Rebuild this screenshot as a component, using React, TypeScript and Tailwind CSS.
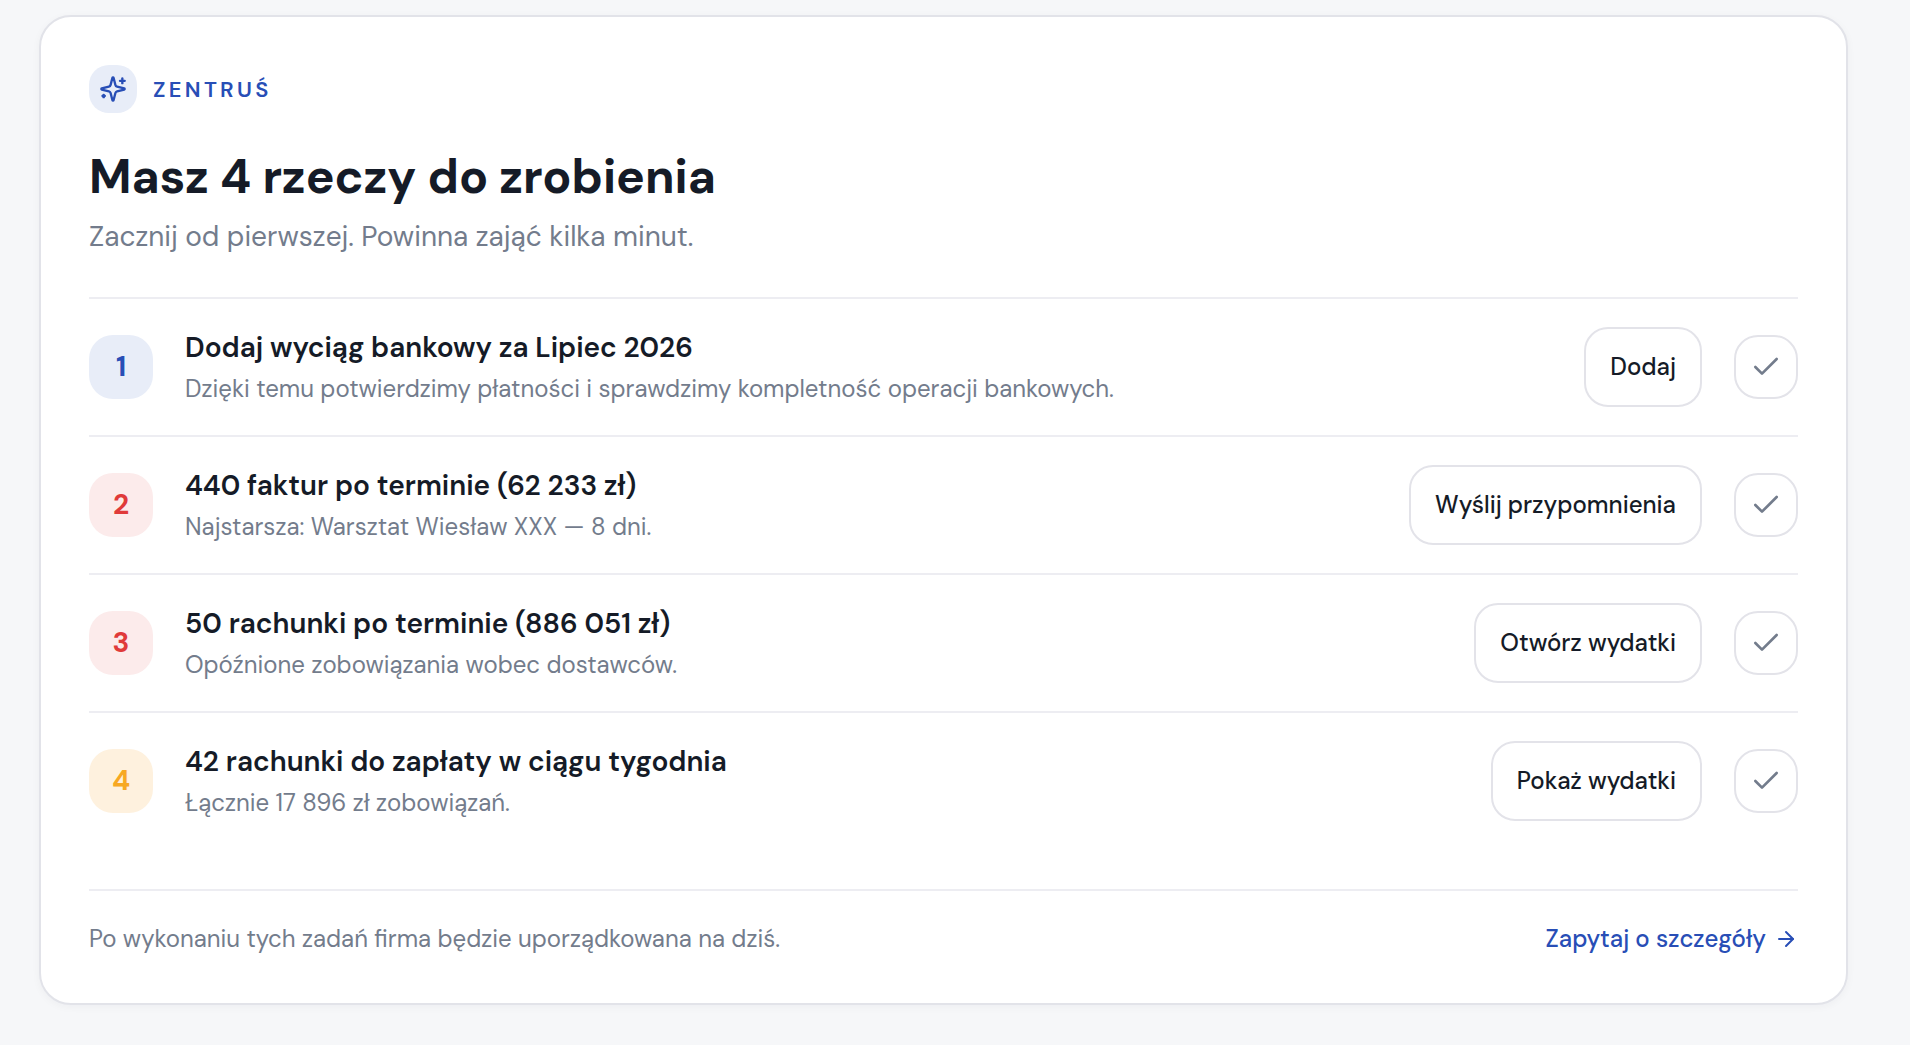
import React, { useState } from "react";
import { ArrowRight, Check } from "lucide-react";

interface Task {
  id: number;
  title: string;
  description: string;
  action: string;
  badge: string;
}

const initialTasks: Task[] = [
  {
    id: 1,
    title: "Dodaj wyciąg bankowy za Lipiec 2026",
    description: "Dzięki temu potwierdzimy płatności i sprawdzimy kompletność operacji bankowych.",
    action: "Dodaj",
    badge: "bg-[#e8edf8] text-[#284eb6]",
  },
  {
    id: 2,
    title: "440 faktur po terminie (62 233 zł)",
    description: "Najstarsza: Warsztat Wiesław XXX — 8 dni.",
    action: "Wyślij przypomnienia",
    badge: "bg-[#fcebeb] text-[#e03a3a]",
  },
  {
    id: 3,
    title: "50 rachunki po terminie (886 051 zł)",
    description: "Opóźnione zobowiązania wobec dostawców.",
    action: "Otwórz wydatki",
    badge: "bg-[#fcebeb] text-[#e03a3a]",
  },
  {
    id: 4,
    title: "42 rachunki do zapłaty w ciągu tygodnia",
    description: "Łącznie 17 896 zł zobowiązań.",
    action: "Pokaż wydatki",
    badge: "bg-[#fef1de] text-[#f7a823]",
  },
];

const SparklesIcon: React.FC = () => (
  <svg
    className="w-7 h-7"
    fill="none"
    stroke="currentColor"
    strokeWidth={2}
    strokeLinecap="round"
    strokeLinejoin="round"
    viewBox="0 0 24 24"
    aria-hidden="true"
  >
    <path d="M9.937 15.5A2 2 0 0 0 8.5 14.063l-6.135-1.582a.5.5 0 0 1 0-.962L8.5 9.936A2 2 0 0 0 9.937 8.5l1.582-6.135a.5.5 0 0 1 .963 0L14.063 8.5A2 2 0 0 0 15.5 9.937l6.135 1.581a.5.5 0 0 1 0 .964L15.5 14.063a2 2 0 0 0-1.437 1.437l-1.582 6.135a.5.5 0 0 1-.963 0z" />
    <path d="M20 3v4" />
    <path d="M22 5h-4" />
    <path d="M4 17v2" />
    <path d="M5 18H3" />
  </svg>
);

const TaskRow: React.FC<{ task: Task; onDone: (id: number) => void }> = ({ task, onDone }) => (
  <li className="flex items-center gap-8 py-7 border-b-2 border-[#ededf2] last:border-b-0">
    <span
      className={`flex items-center justify-center shrink-0 w-16 h-16 rounded-3xl text-[28px] font-bold ${task.badge}`}
    >
      {task.id}
    </span>
    <div className="flex-1 min-w-0">
      <h3 className="text-[28px] leading-[42px] font-semibold">{task.title}</h3>
      <p className="mt-0.5 text-[24px] leading-9 text-[#737c8c]">{task.description}</p>
    </div>
    <button
      type="button"
      className="shrink-0 h-20 px-6 rounded-3xl border-2 border-[#e3e3e9] text-[24px] font-medium hover:bg-gray-50 transition-colors"
    >
      {task.action}
    </button>
    <button
      type="button"
      aria-label="Oznacz jako zrobione"
      onClick={() => onDone(task.id)}
      className="flex items-center justify-center shrink-0 w-16 h-16 rounded-3xl border-2 border-[#e3e3e9] text-[#737c8c] hover:bg-gray-50 transition-colors"
    >
      <Check className="w-8 h-8" />
    </button>
  </li>
);

const App: React.FC = () => {
  const [tasks, setTasks] = useState(initialTasks);

  const handleDone = (id: number) => {
    setTasks(tasks.filter((task) => task.id !== id));
  };

  return (
    <main className="min-h-screen bg-[#f6f7f9] pt-[15px] pb-10 pl-[39px] pr-[62px] font-['DM_Sans','Inter',sans-serif] text-[#151b27]">
      <section className="p-12 bg-white border-2 border-[#e2e3e9] rounded-[32px] shadow-[0_2px_8px_rgba(16,24,40,0.04)]">
        {/* Brand */}
        <div className="flex items-center gap-4 text-[#284eb6]">
          <div className="flex items-center justify-center w-12 h-12 rounded-[20px] bg-[#e8edf8]">
            <SparklesIcon />
          </div>
          <span className="text-[22px] leading-[33px] font-semibold tracking-[0.15em]">ZENTRUŚ</span>
        </div>

        <h2 className="mt-8 text-[48px] leading-[64px] font-bold">
          Masz {tasks.length} rzeczy do zrobienia
        </h2>
        <p className="mt-2 text-[28px] leading-10 text-[#737c8c]">
          Zacznij od pierwszej. Powinna zająć kilka minut.
        </p>

        {/* Tasks */}
        <ul className="mt-10 border-t-2 border-[#ededf2]">
          {tasks.map((task) => (
            <TaskRow key={task.id} task={task} onDone={handleDone} />
          ))}
        </ul>

        {/* Footer */}
        <div className="flex items-center justify-between mt-10 pt-8 border-t-2 border-[#ededf2] text-[24px] leading-8">
          <p className="text-[#737c8c]">Po wykonaniu tych zadań firma będzie uporządkowana na dziś.</p>
          <a href="#" className="flex items-center gap-2 font-medium text-[#284eb6] hover:underline">
            Zapytaj o szczegóły
            <ArrowRight className="w-6 h-6" />
          </a>
        </div>
      </section>
    </main>
  );
};

export default App;
